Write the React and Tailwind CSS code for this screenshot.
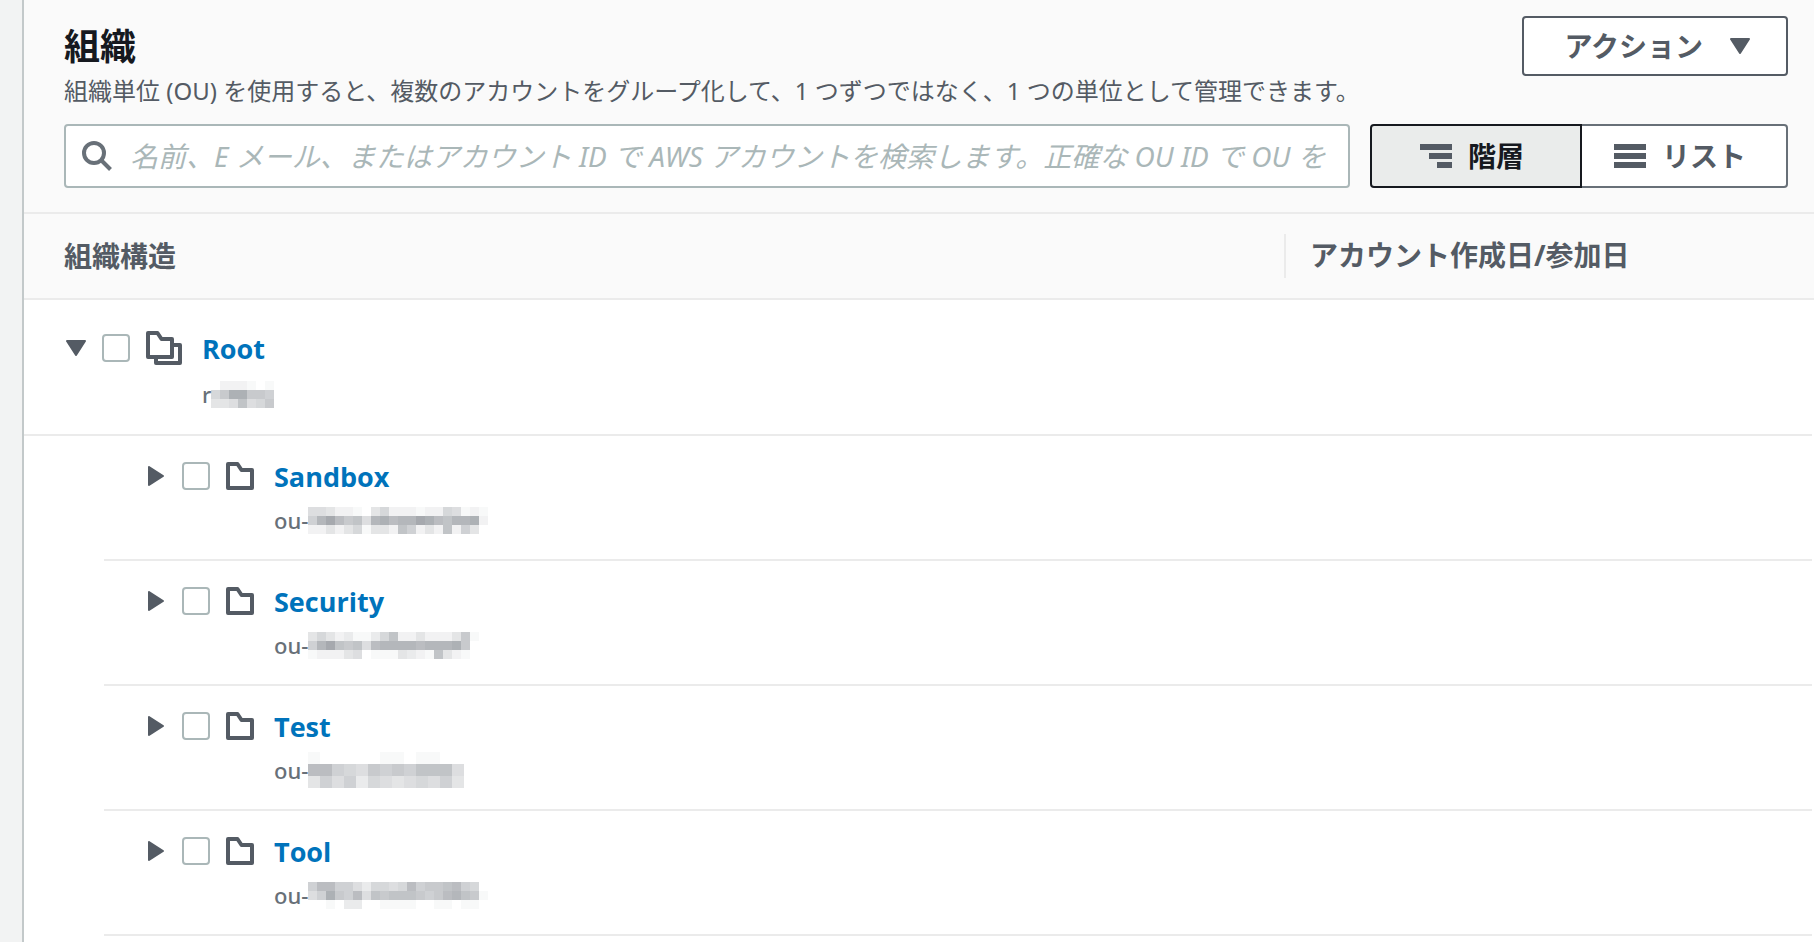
const root = {
  id: 'root',
  name: 'Root',
  prefix: 'r',
  cell: 9,
  mask: ['0222101', '68cc887', '4459568'],
}

const units = [
  {
    id: 'sandbox',
    name: 'Sandbox',
    prefix: 'ou-',
    cell: 9,
    mask: ['55422104622212265121', '7bda895bcabbdca9bbc2', '22424614429724292740'],
  },
  {
    id: 'security',
    name: 'Security',
    prefix: 'ou-',
    cell: 9,
    mask: ['4642311369224222481', '7bd9895abbbbabbbc80', '1222450111432194210'],
  },
  {
    id: 'test',
    name: 'Test',
    prefix: 'ou-',
    cell: 12,
    mask: ['1000001101100', 'aa76587879995', '4757365456574'],
  },
  {
    id: 'tool',
    name: 'Tool',
    prefix: 'ou-',
    cell: 9,
    mask: ['7aa77536656a7889a760', '57c87a598999878ab981', '00103300111100110110'],
  },
]

function CaretDown() {
  return (
    <svg width="20" height="16" viewBox="0 0 20 16" fill="#545b64" stroke="#545b64" strokeWidth="2" strokeLinejoin="round">
      <path d="M1 1h18l-9 14z" />
    </svg>
  )
}

function CaretRight() {
  return (
    <svg width="16" height="20" viewBox="0 0 16 20" fill="#545b64" stroke="#545b64" strokeWidth="2" strokeLinejoin="round">
      <path d="M1 1v18l14-9z" />
    </svg>
  )
}

function FolderIcon() {
  return (
    <svg width="28" height="28" viewBox="0 0 28 28" fill="none" stroke="#545b64" strokeWidth="4" strokeLinejoin="round">
      <path d="M2 2h9.500l4 6H26v18H2z" />
    </svg>
  )
}

function FoldersIcon() {
  return (
    <svg width="36" height="34" viewBox="0 0 36 34" fill="none" stroke="#545b64" strokeWidth="4" strokeLinejoin="round">
      <path d="M2 2h9.500l4 6H26v18H2z" />
      <path d="M28 14h6v18H10v-4" />
    </svg>
  )
}

function SearchIcon() {
  return (
    <svg className="shrink-0" width="30" height="30" viewBox="0 0 30 30" fill="none" stroke="#687078" strokeWidth="4">
      <circle cx="12" cy="12" r="10" />
      <path d="M19 19l9.500 9.500" />
    </svg>
  )
}

function TreeIcon() {
  return (
    <svg width="32" height="24" viewBox="0 0 32 24" fill="#545b64">
      <path d="M0 0h32v6H0zM9 9h23v6H9zM17 18h15v6H17z" />
    </svg>
  )
}

function ListIcon() {
  return (
    <svg width="32" height="24" viewBox="0 0 32 24" fill="#545b64">
      <path d="M0 0h32v6H0zM0 9h32v6H0zM0 18h32v6H0z" />
    </svg>
  )
}

// Each hex digit is the darkness of one block of the hidden id
function HiddenId({ mask, cell }) {
  const width = mask[0].length * cell
  const height = mask.length * cell

  return (
    <svg width={width} height={height} viewBox={`0 0 ${width} ${height}`} shapeRendering="crispEdges" aria-hidden="true">
      {mask.map((line, y) =>
        [...line].map((level, x) => (
          <rect
            key={`${x}-${y}`}
            x={x * cell}
            y={y * cell}
            width={cell}
            height={cell}
            fill="#545b64"
            fillOpacity={parseInt(level, 16) * 0.04}
          />
        )),
      )}
    </svg>
  )
}

function Checkbox({ label }) {
  return (
    <input
      type="checkbox"
      aria-label={label}
      className="mr-4 size-7 appearance-none rounded-sm border-2 border-[#aab7b8] bg-white checked:bg-[#0073bb]"
    />
  )
}

function NameLink({ name }) {
  return (
    <a href="#" className="ml-5 pt-[2px] font-['Open_Sans',sans-serif] text-[27px] leading-9 font-bold text-[#0073bb] hover:underline">
      {name}
    </a>
  )
}

function UnitRow({ unit }) {
  return (
    <tr>
      <td className="pl-20">
        <div className="h-[125px] border-b-2 border-[#ebebeb] pt-[22px] pl-11">
          <div className="flex h-9 items-center">
            <button type="button" aria-label={`${unit.name} を展開`} className="mr-[18px]">
              <CaretRight />
            </button>
            <Checkbox label={unit.name} />
            <FolderIcon />
            <NameLink name={unit.name} />
          </div>
          <div className="mt-2 flex h-9 items-center pl-[126px] text-[22px] font-medium text-[#687078]">
            {unit.prefix}
            <HiddenId mask={unit.mask} cell={unit.cell} />
          </div>
        </div>
      </td>
      <td className="pr-[2px]">
        <div className="h-[125px] border-b-2 border-[#ebebeb]" />
      </td>
    </tr>
  )
}

export default function App() {
  return (
    <div className="flex min-h-screen bg-[#f2f3f3] pl-[22px] font-['Noto_Sans','Noto_Sans_CJK_JP',sans-serif] text-[#545b64]">
      <main className="min-w-0 flex-1 border-l-2 border-[#c3c9ca] bg-white">
        <header className="border-b-2 border-[#ebebeb] bg-[#fafafa] pt-4 pr-[26px] pb-6 pl-10">
          <div className="flex h-[108px] items-start justify-between">
            <div className="pt-[9px]">
              <h1 className="text-[36px] leading-[44px] font-bold text-[#16191f]">組織</h1>
              <p className="text-[24px] leading-[44px]">
                組織単位 (OU) を使用すると、複数のアカウントをグループ化して、1 つずつではなく、1 つの単位として管理できます。
              </p>
            </div>
            <button
              type="button"
              className="flex h-[60px] items-center gap-[27px] rounded-sm border-2 border-[#545b64] bg-white pr-9 pl-10 text-[28px] leading-10 font-bold"
            >
              アクション
              <CaretDown />
            </button>
          </div>
          <div className="flex h-16 gap-5">
            <label className="flex min-w-0 flex-1 items-center gap-[18px] rounded-sm border-2 border-[#aab7b8] bg-white pr-3 pl-4">
              <SearchIcon />
              <input
                type="text"
                aria-label="AWS アカウントを検索"
                placeholder="名前、E メール、またはアカウント ID で AWS アカウントを検索します。正確な OU ID で OU を"
                className="h-full min-w-0 flex-1 text-[28px] outline-none placeholder:text-[#aab7b8] placeholder:italic"
              />
            </label>
            <div className="flex text-[28px] font-bold">
              <button
                type="button"
                aria-pressed="true"
                className="flex items-center gap-4 rounded-l-sm border-2 border-[#16191f] bg-[#eaeceb] pr-14 pl-12 text-[#16191f]"
              >
                <TreeIcon />
                階層
              </button>
              <button
                type="button"
                aria-pressed="false"
                className="flex items-center gap-4 rounded-r-sm border-2 border-l-0 border-[#687078] bg-white pr-10 pl-8"
              >
                <ListIcon />
                リスト
              </button>
            </div>
          </div>
        </header>

        <table className="w-full table-fixed">
          <thead>
            <tr className="h-[85px] border-b-2 border-[#ebebeb] bg-[#fafafa] text-left text-[28px]">
              <th scope="col" className="pl-10 leading-10 font-bold">組織構造</th>
              <th scope="col" className="w-[530px] font-bold">
                <div className="h-11 border-l-2 border-[#ebebeb] pl-6 leading-[42px]">アカウント作成日/参加日</div>
              </th>
            </tr>
          </thead>
          <tbody>
            <tr>
              <td>
                <div className="h-[136px] border-b-2 border-[#ebebeb] pt-[30px] pl-[42px]">
                  <div className="flex h-9 items-center">
                    <button type="button" aria-label="Root を折りたたむ" className="mr-4">
                      <CaretDown />
                    </button>
                    <Checkbox label={root.name} />
                    <FoldersIcon />
                    <NameLink name={root.name} />
                  </div>
                  <div className="mt-2.5 flex h-9 items-center pl-[136px] text-[22px] font-medium text-[#687078]">
                    {root.prefix}
                    <HiddenId mask={root.mask} cell={root.cell} />
                  </div>
                </div>
              </td>
              <td className="pr-[2px]">
                <div className="h-[136px] border-b-2 border-[#ebebeb]" />
              </td>
            </tr>
            {units.map((unit) => (
              <UnitRow key={unit.id} unit={unit} />
            ))}
          </tbody>
        </table>
      </main>
    </div>
  )
}
